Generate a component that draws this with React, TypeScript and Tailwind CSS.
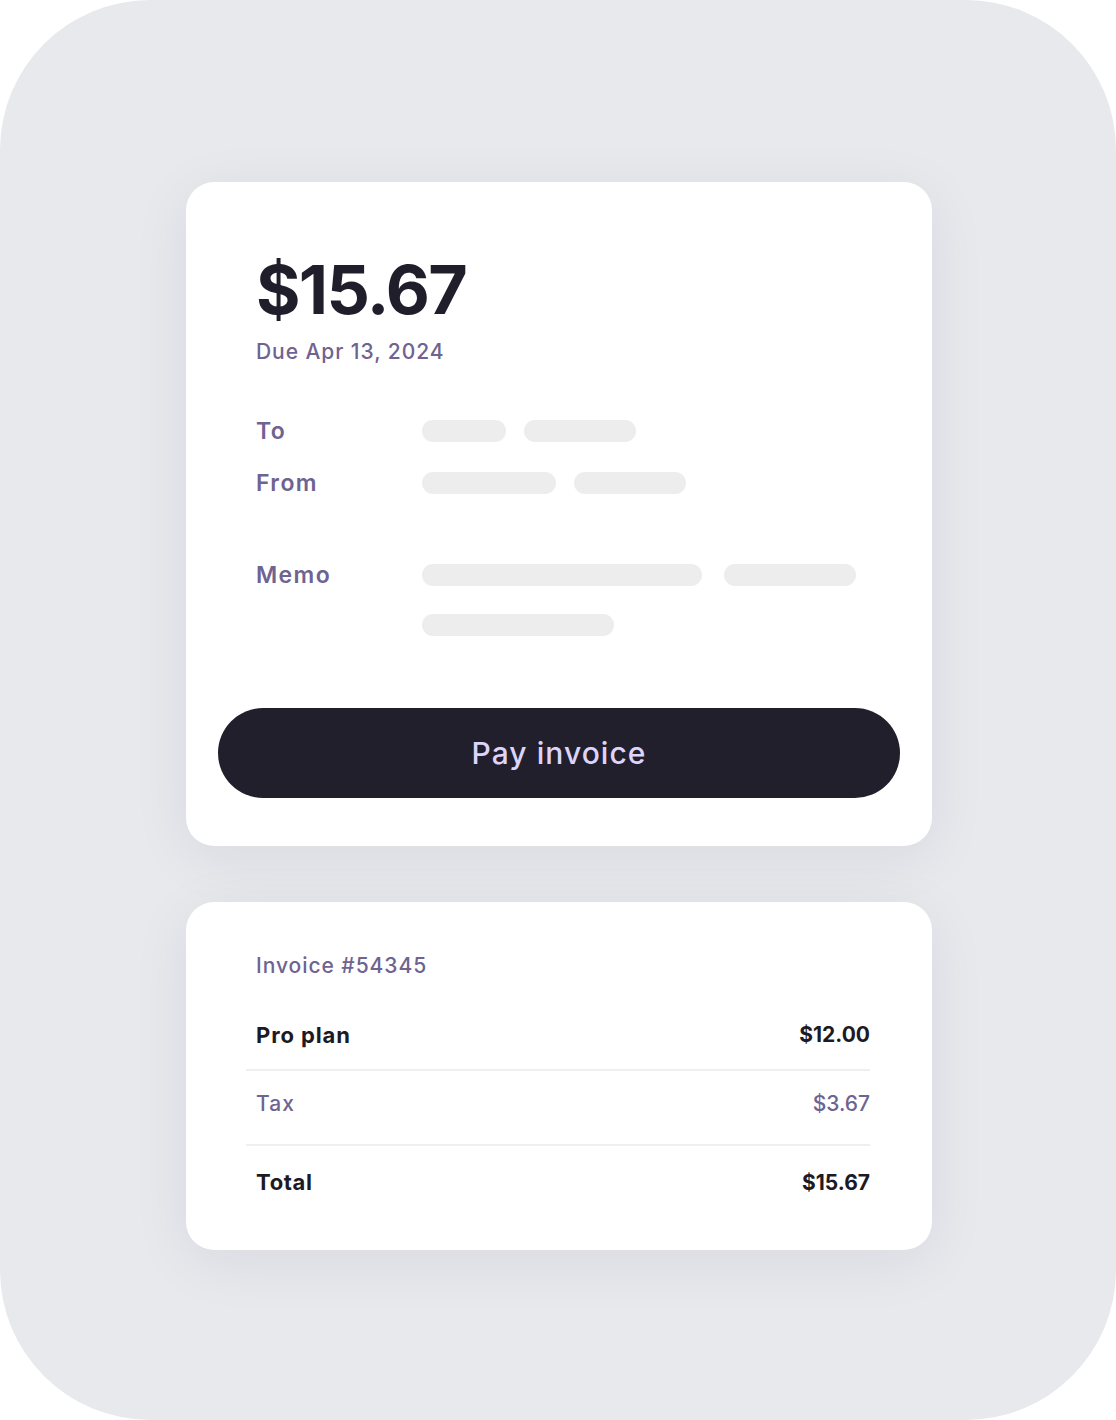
import React from "react";

const font = { fontFamily: "Inter, 'Noto Sans', sans-serif" };

function Bar({ w }: { w: string }) {
  return <div className={`h-[22px] rounded-full bg-[#ededed] ${w}`} />;
}

export default function App() {
  return (
    <div className="w-[1116px] h-[1420px] bg-white" style={font}>
      <div className="w-[1116px] h-[1420px] rounded-[150px] bg-[#e8e9ed] flex flex-col items-start pt-[182px] pl-[186px] gap-[56px]">
        {/* Card 1 */}
        <div className="w-[746px] rounded-[28px] bg-white shadow-[0_12px_60px_rgba(30,30,50,0.07)] px-[32px] pt-[73px] pb-[48px] flex flex-col">
          <div className="pl-[38px] flex flex-col">
            <div className="text-[68px] leading-[68px] font-bold tracking-[-0.025em] text-[#201e2b]">$15.67</div>
            <div className="mt-[15px] text-[21px] leading-[28px] font-medium text-[#6e6391] tracking-[0.045em]">Due Apr 13, 2024</div>
            <div className="mt-[54px] flex flex-col">
              <div className="flex items-center h-[22px]">
                <div className="w-[166px] text-[23px] leading-[22px] font-semibold text-[#6e6391] tracking-[0.06em]">To</div>
                <div className="flex gap-[18px]">
                  <Bar w="w-[84px]" />
                  <Bar w="w-[112px]" />
                </div>
              </div>
              <div className="flex items-center h-[22px] mt-[30px]">
                <div className="w-[166px] text-[23px] leading-[22px] font-semibold text-[#6e6391] tracking-[0.06em]">From</div>
                <div className="flex gap-[18px]">
                  <Bar w="w-[134px]" />
                  <Bar w="w-[112px]" />
                </div>
              </div>
              <div className="flex items-start mt-[70px]">
                <div className="w-[166px] text-[23px] leading-[22px] font-semibold text-[#6e6391] tracking-[0.06em]">Memo</div>
                <div className="flex flex-col gap-[28px]">
                  <div className="flex gap-[22px]">
                    <Bar w="w-[280px]" />
                    <Bar w="w-[132px]" />
                  </div>
                  <Bar w="w-[192px]" />
                </div>
              </div>
            </div>
          </div>
          <button className="mt-[72px] h-[90px] w-[682px] rounded-full bg-[#211f2b] flex items-center justify-center text-[30px] font-medium text-[#ddd3fb] tracking-[0.035em]">
            Pay invoice
          </button>
        </div>

        {/* Card 2 */}
        <div className="w-[746px] rounded-[28px] bg-white shadow-[0_12px_60px_rgba(30,30,50,0.07)] pl-[60px] pr-[62px] pt-[50px] pb-[31px] flex flex-col">
          <div className="pl-[10px] h-[28px] text-[21px] leading-[28px] font-medium text-[#6e6391] tracking-[0.045em]">Invoice #54345</div>
          <div className="mt-[21px] h-[70px] flex items-center justify-between pl-[10px] border-b-2 border-[#efefef] text-[21px] font-bold text-[#1c1a24]">
            <span className="text-[22px] tracking-[0.04em]">Pro plan</span>
            <span>$12.00</span>
          </div>
          <div className="h-[75px] pb-[8px] flex items-center justify-between pl-[10px] border-b-2 border-[#efefef] text-[21px] font-medium text-[#6e6391]">
            <span className="tracking-[0.05em]">Tax</span>
            <span>$3.67</span>
          </div>
          <div className="h-[73px] flex items-center justify-between pl-[10px] text-[21px] font-bold text-[#1c1a24]">
            <span className="text-[22px] tracking-[0.03em]">Total</span>
            <span>$15.67</span>
          </div>
        </div>
      </div>
    </div>
  );
}
